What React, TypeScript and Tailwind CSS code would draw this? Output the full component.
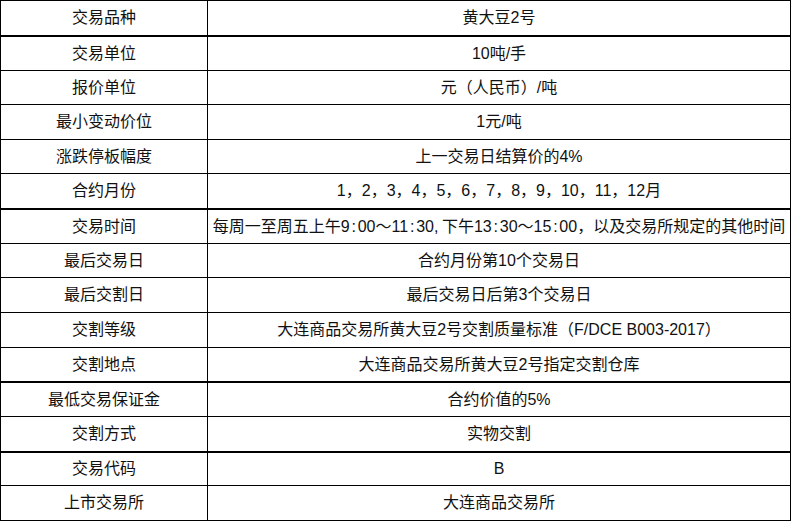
import React from "react";

type Row = { k: string; v: React.ReactNode; h: string; thick?: boolean };

const C = () => <span className="inline-block w-[8px] text-center">:</span>;
const Cm = () => <span className="inline-block w-[8px]">,</span>;

const timeText = (
  <span>
    每周一至周五上午9<C />00～11<C />30<Cm />下午13<C />30～15<C />00，以及交易所规定的其他时间
  </span>
);

const rows: Row[] = [
  { k: "交易品种", v: "黄大豆2号", h: "h-[36px]", thick: true },
  { k: "交易单位", v: "10吨/手", h: "h-[34px]" },
  { k: "报价单位", v: "元（人民币）/吨", h: "h-[34px]" },
  { k: "最小变动价位", v: "1元/吨", h: "h-[35px]" },
  { k: "涨跌停板幅度", v: "上一交易日结算价的4%", h: "h-[34px]" },
  { k: "合约月份", v: "1，2，3，4，5，6，7，8，9，10，11，12月", h: "h-[36px]", thick: true },
  { k: "交易时间", v: timeText, h: "h-[34px]" },
  { k: "最后交易日", v: "合约月份第10个交易日", h: "h-[34px]" },
  { k: "最后交割日", v: "最后交易日后第3个交易日", h: "h-[35px]" },
  { k: "交割等级", v: "大连商品交易所黄大豆2号交割质量标准（F/DCE B003-2017）", h: "h-[35px]" },
  { k: "交割地点", v: "大连商品交易所黄大豆2号指定交割仓库", h: "h-[35px]", thick: true },
  { k: "最低交易保证金", v: "合约价值的5%", h: "h-[34px]" },
  { k: "交割方式", v: "实物交割", h: "h-[36px]", thick: true },
  { k: "交易代码", v: "B", h: "h-[33px]" },
  { k: "上市交易所", v: "大连商品交易所", h: "h-[35px]" },
];

export default function App() {
  return (
    <div
      className="w-[792px] h-[522px] bg-white text-[16px] text-[#111]"
      style={{ fontFamily: '"Liberation Sans", Arial, "Noto Sans CJK SC", sans-serif' }}
    >
      <div className="w-[791px] border-t border-l border-r border-black">
        {rows.map((r, i) => (
          <div
            key={i}
            className={`flex box-border border-black ${r.h} ${r.thick ? "border-b-2" : "border-b"}`}
          >
            <div className="w-[207px] shrink-0 border-r border-black flex items-center justify-center">
              {r.k}
            </div>
            <div className="flex-1 flex items-center justify-center whitespace-nowrap overflow-hidden">
              {r.v}
            </div>
          </div>
        ))}
      </div>
    </div>
  );
}
